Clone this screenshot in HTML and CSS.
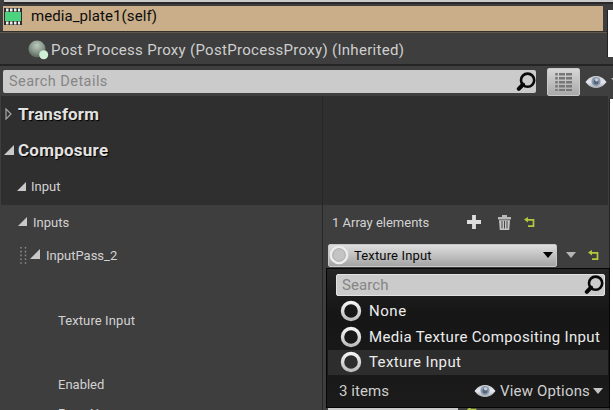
FILE: index.html
```
<!DOCTYPE html>
<html lang="en">
<head>
<meta charset="utf-8">
<title>Details</title>
<link rel="stylesheet" href="styles.css">
</head>
<body>
<svg class="defs" width="0" height="0">
  <defs>
    <linearGradient id="gLens" x1="0" y1="0" x2="0" y2="1"><stop offset="0" stop-color="#c4c8ce"/><stop offset=".5" stop-color="#e6e9ee"/><stop offset="1" stop-color="#a4a9b0"/></linearGradient>
    <linearGradient id="gRing" x1="0" y1="0" x2="0" y2="1"><stop offset="0" stop-color="#f4f4f4"/><stop offset="1" stop-color="#bdbdbd"/></linearGradient>
    <radialGradient id="gBall" cx=".5" cy=".3" r=".7"><stop offset="0" stop-color="#bccabd"/><stop offset=".55" stop-color="#88988b"/><stop offset="1" stop-color="#59665b"/></radialGradient>
    <symbol id="eye" viewBox="0 0 22 14"><path d="M.5 7C4 2.400 7.500 1 11 1s7 1.400 10.500 6C18 11.600 14.500 13 11 13S4 11.600 .5 7z" fill="url(#gLens)"/><circle cx="11" cy="6.600" r="4.600" fill="#8c9aae"/><circle cx="11" cy="6.900" r="2.500" fill="#56647c"/><circle cx="11.600" cy="4.800" r="1.600" fill="#c9d2de"/></symbol>
    <symbol id="search" viewBox="0 0 20 20"><circle cx="11.600" cy="8.200" r="6.600" fill="none" stroke="#080808" stroke-width="2.600"/><path d="M7 12.500L2.800 16.800" stroke="#080808" stroke-width="4" stroke-linecap="round"/></symbol>
    <symbol id="open" viewBox="0 0 9 9"><path d="M9 0v9H0z" fill="#c9c9c9"/></symbol>
    <symbol id="ring" viewBox="0 0 22 22"><circle cx="11" cy="11" r="8.500" fill="none" stroke="url(#gRing)" stroke-width="3.400"/></symbol>
    <symbol id="reset" viewBox="0 0 11 11"><path d="M3 2.800h6.500v6.400H4" fill="none" stroke="#b3c93d" stroke-width="1.700"/><path d="M0 2.600L4 0v5.600z" fill="#b3c93d"/></symbol>
    <symbol id="down" viewBox="0 0 10 6"><path d="M0 0h10L5 6z" fill="currentColor"/></symbol>
  </defs>
</svg>
<div class="window">
  <main class="panel">
    <div class="edge"></div>
    <div class="node node-selected">
      <svg width="18" height="17" viewBox="0 0 18 17"><path d="M0 0h18v17H0z" fill="#2d302d"/><path d="M2 2h14M2 15h14" stroke="#f0f0f0" stroke-width="3" stroke-dasharray="2.500 1.500"/><path d="M1 4h16v9H1z" fill="#4bd37f"/></svg>
      <span class="t-self">media_plate1(self)</span>
    </div>
    <div class="node node-child">
      <svg width="21" height="20" viewBox="0 0 21 20"><circle cx="9" cy="9" r="8.500" fill="url(#gBall)"/><circle cx="15.700" cy="14.700" r="4.500" fill="#cfeed6"/></svg>
      <span class="t-proxy">Post Process Proxy (PostProcessProxy) (Inherited)</span>
    </div>
    <div class="toolbar">
      <div class="search"><span class="t-details">Search Details</span><svg width="20" height="20"><use href="#search"/></svg></div>
      <div class="matrix"><svg width="18" height="18" viewBox="0 0 18 18"><path d="M1.500 0v18" stroke="#777" stroke-width="2.500" stroke-dasharray="2.600 1.400"/><path d="M7 0v18M14 0v18" stroke="#777" stroke-width="6" stroke-dasharray="2.600 1.400"/></svg></div>
      <svg class="tool-eye" width="22" height="14"><use href="#eye"/></svg>
      <svg class="tool-arrow" width="8" height="5"><use href="#down"/></svg>
    </div>
    <div class="details">
      <div class="row head"><div class="name cat"><svg width="7" height="12" viewBox="0 0 7 12"><path d="M1 1v10l5-5z" fill="none" stroke="#a5a5a5" stroke-width="1.200"/></svg><b class="t-transform">Transform</b></div><div class="value"></div></div>
      <div class="row head"><div class="name cat open"><svg width="10" height="10"><use href="#open"/></svg><b class="t-composure">Composure</b></div><div class="value"></div></div>
      <div class="row head sub"><div class="name lvl1"><svg width="9" height="9"><use href="#open"/></svg><span>Input</span></div><div class="value"></div></div>
      <div class="row inputs"><div class="name lvl1b"><svg class="raised" width="9" height="9"><use href="#open"/></svg><span>Inputs</span></div>
        <div class="value array"><span>1 Array elements</span>
          <svg class="add" width="14" height="14" viewBox="0 0 14 14"><path d="M7 0v14M0 7h14" stroke="#dedede" stroke-width="3.800"/></svg>
          <svg class="trash" width="13" height="15" viewBox="0 0 13 15"><path d="M0 2h4V0h5v2h4v2.500H0z" fill="#b9b9b9"/><path d="M1 5.200h11l-.8 9.800H1.800z" fill="#c6c6c6"/><path d="M4 6v7.500M6.500 6v7.500M9 6v7.500" stroke="#444" stroke-width="1"/></svg>
          <svg class="undo" width="11" height="11"><use href="#reset"/></svg>
        </div></div>
      <div class="row pass"><div class="name lvl2"><svg width="7" height="17" viewBox="0 0 7 17"><path d="M1 0v17M5.500 0v17" stroke="#8b8b8b" stroke-width="1.500" stroke-dasharray="1.600 2.200"/></svg><svg class="raised" width="10" height="10"><use href="#open"/></svg><span>InputPass_2</span></div>
        <div class="value picker">
          <div class="combo"><svg width="20" height="20" viewBox="0 0 20 20"><circle cx="10" cy="10" r="8" fill="#c4c4c4" stroke="#ececec" stroke-width="2.600"/><circle cx="10" cy="10" r="6.300" fill="none" stroke="#a4a4a4" stroke-width=".8"/></svg><span>Texture Input</span><svg class="caret" width="10" height="6"><use href="#down"/></svg></div>
          <svg class="more" width="10" height="6"><use href="#down"/></svg>
          <svg class="undo" width="11" height="11"><use href="#reset"/></svg>
        </div></div>
      <div class="row texture"><div class="name lvl3"><span class="t-tex">Texture Input</span></div><div class="value"></div></div>
      <div class="row enabled"><div class="name lvl3"><span>Enabled</span></div><div class="value"></div></div>
      <div class="row passname"><div class="name lvl3"><span>Pass Name</span></div><div class="value last"><div class="field">InputPass_2</div><svg width="10" height="10"><use href="#reset"/></svg></div></div>
    </div>
  </main>
  <aside class="side"><div class="card"></div><div class="card tall"></div></aside>
</div>
<div class="menu">
  <div class="menu-search"><span class="t-search">Search</span><svg width="20" height="20"><use href="#search"/></svg></div>
  <div class="item"><svg width="22" height="22"><use href="#ring"/></svg><span class="t-none">None</span></div>
  <div class="item"><svg width="22" height="22"><use href="#ring"/></svg><span class="t-media">Media Texture Compositing Input</span></div>
  <div class="item current"><svg width="22" height="22"><use href="#ring"/></svg><span class="t-item">Texture Input</span></div>
  <div class="foot"><span class="t-count">3 items</span><svg class="foot-eye" width="22" height="14"><use href="#eye"/></svg><span class="t-view">View Options</span><svg class="foot-arrow" width="10" height="6"><use href="#down"/></svg></div>
</div>
</body>
</html>
```
FILE: styles.css
```
* { box-sizing: border-box; }
body { margin: 0; width: 613px; height: 410px; overflow: hidden; position: relative; background: #3e3e3e; color: #d2d2d2; font: 13px Roboto, "Liberation Sans", sans-serif; white-space: nowrap; }
svg { display: block; flex: none; }
.defs { position: absolute; }
.window { display: flex; height: 410px; }
.panel { flex: none; width: 608px; height: 410px; }

.edge { height: 6px; margin-left: 4px; width: 609px; background: linear-gradient(#cacaca 0 2px, #292929 2px 4px, #3d3d3d 4px); }
.node { display: flex; align-items: center; font-size: 15px; }
.node-selected { height: 25px; width: 600px; margin-left: 3px; padding: 0 0 5px 1px; background: #c9ae89; color: #0c0c0c; gap: 9px; }
.node-child { height: 33px; padding: 4px 0 0 28px; gap: 2px; background: linear-gradient(#35302a 0 1px, #60584d 1px 2px, #3e3e3e 2px); color: #cfcfcf; }
.toolbar { display: flex; align-items: center; width: 613px; height: 32px; padding: 1px 0 0 3px; background: #3f3f3f; border-top: 2px solid #252525; overflow: hidden; }
.search { flex: none; display: flex; align-items: center; justify-content: space-between; width: 533px; height: 23px; padding: 0 0 0 6px; background: #cbcbcb; border-radius: 2px; color: #858585; font-size: 14.500px; }
.matrix { flex: none; display: flex; align-items: center; justify-content: center; width: 33px; height: 28px; margin-left: 11px; background: linear-gradient(#d6d6d6, #a9a9a9); border: 1px solid #c9c9c9; border-radius: 2px; }
.tool-eye { margin-left: 5px; }
.tool-arrow { margin: -3px 0 0 4px; color: #b5b5b5; }

.details { margin-left: 1px; }
.row { display: grid; grid-template-columns: 322px 1fr; background: #3e3e3e; }
.name { display: flex; align-items: center; border-right: 1px solid #272727; }
.value { display: flex; align-items: center; }
.head { height: 36px; background: #2f2f2f; }
.sub { height: 37px; }
.inputs { height: 34px; }
.pass { height: 32px; }
.texture { height: 99px; }
.enabled { height: 29px; }
.passname { height: 29px; }
.cat { padding-left: 4px; gap: 6px; font-size: 17px; color: #e2e2e2; text-shadow: 1px 1px 1px #000; }
.open { padding-left: 3px; gap: 4px; }
.raised { margin-top: -2px; }
.lvl1 { padding-left: 16px; gap: 5px; }
.lvl1b { padding-left: 17px; gap: 6px; }
.lvl2 { padding-left: 19px; gap: 3px; }
.lvl2 span { margin-left: 3px; }
.lvl3 { padding-left: 57px; }
.array { padding-left: 9px; }
.add { margin-left: 38px; }
.trash { margin-left: 17px; }
.array .undo { margin-left: 13px; }
.picker { padding-left: 5px; }
.combo { flex: none; display: flex; align-items: center; width: 229px; height: 23px; padding: 0 3px 0 0; gap: 5px; background: linear-gradient(#dedede, #a4a4a4); border: 1px solid #c8c8c8; border-radius: 2px; color: #0a0a0a; }
.caret { margin-left: auto; color: #000; }
.more { margin-left: 9px; color: #b5b5b5; }
.picker .undo { margin-left: 12px; }
.last { align-items: flex-start; padding: 8px 0 0 5px; }
.field { width: 130px; height: 20px; padding-left: 6px; background: #cbcbcb; color: #111; line-height: 19px; }
.last svg { margin-left: 9px; }

.side { width: 5px; padding-top: 10px; }
.card { height: 47px; background: #fff; margin-left: 0; box-shadow: -1px 0 #242424; }
.tall { height: 320px; margin: 42px 0 0 2px; }

.menu { position: absolute; left: 326px; top: 268px; width: 284px; height: 140px; padding-top: 5px; background: linear-gradient(#252525, #161616 45px, #1b1b1b); border: 1px solid #050505; color: #ececec; font-size: 15px; }
.menu-search { display: flex; align-items: center; justify-content: space-between; width: 269px; height: 22px; margin: 0 0 2px 9px; padding-left: 5px; background: #cbcbcb; border: 1px solid #e2e2e2; border-radius: 2px; color: #858585; }
.item { display: flex; align-items: center; height: 26px; margin: 0 1px; padding-left: 12px; gap: 7px; }
.current { height: 25px; padding-bottom: 1px; background: #2d2d2d; }
.foot { display: flex; align-items: center; height: 32px; padding-left: 12px; color: #cfcfcf; }
.foot-eye { margin-left: auto; }
.t-view { margin-left: 4px; }
.foot-arrow { margin: 0 6px 0 3px; color: #c4c4c4; }

.t-self { letter-spacing: .08px; }
.t-proxy { letter-spacing: .3px; }
.t-details { letter-spacing: .45px; }
.t-transform { letter-spacing: .12px; }
.t-composure { letter-spacing: .25px; }
.t-tex { letter-spacing: .1px; }
.combo span { letter-spacing: .15px; }
.t-search { letter-spacing: .1px; }
.t-none { letter-spacing: .55px; }
.t-media { letter-spacing: .33px; }
.t-item { letter-spacing: .38px; }
.t-count { letter-spacing: .06px; }
.t-view { letter-spacing: .16px; }
```
